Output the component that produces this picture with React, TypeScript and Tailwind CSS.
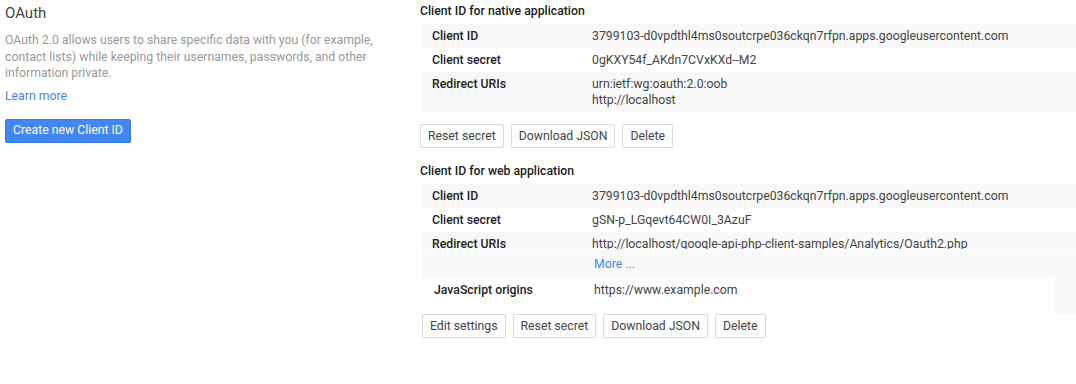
import React from "react";

type Row = { label: string; values: string[] };

const nativeRows: Row[] = [
  { label: "Client ID", values: ["3799103-d0vpdthl4ms0soutcrpe036ckqn7rfpn.apps.googleusercontent.com"] },
  { label: "Client secret", values: ["0gKXY54f_AKdn7CVxKXd--M2"] },
  { label: "Redirect URIs", values: ["urn:ietf:wg:oauth:2.0:oob", "http://localhost"] },
];

function Btn({ children }: { children: React.ReactNode }) {
  return (
    <button className="h-[24px] px-[7px] border border-[#d9d9d9] rounded-[2px] bg-white text-[12.25px] text-[#444] leading-none hover:border-[#c6c6c6]">
      {children}
    </button>
  );
}

function InfoRow({ row, shade }: { row: Row; shade: boolean }) {
  return (
    <div className={`flex pl-[12px] py-[4px] ${shade ? "bg-[#f9f9f9]" : "bg-white"}`}>
      <div className="w-[160px] shrink-0 font-medium text-[#222]">{row.label}</div>
      <div className="text-[#444]">
        {row.values.map((v) => (
          <div key={v}>{v}</div>
        ))}
      </div>
    </div>
  );
}

export default function App() {
  return (
    <div className="w-[1076px] h-[384px] bg-white flex font-['Roboto',sans-serif] text-[12.25px] leading-[16px] overflow-hidden">
      {/* left: oauth intro */}
      <div className="w-[420px] shrink-0 pl-[5px] pt-[3px]">
        <h2 className="text-[15px] leading-[20px] text-[#444]">OAuth</h2>
        <p className="w-[380px] mt-[9px] text-[#999] leading-[16.5px]">
          OAuth 2.0 allows users to share specific data with you (for example, contact lists) while keeping their
          usernames, passwords, and other information private.
        </p>
        <a href="#" className="block mt-[6px] text-[#4285f4]">Learn more</a>
        <button className="mt-[15px] h-[24px] px-[7px] rounded-[2px] bg-[#4285f4] border border-[#3079ed] text-white text-[12.25px] leading-none">
          Create new Client ID
        </button>
      </div>

      {/* right: client ids */}
      <div className="flex-1 pt-[3px]">
        <h3 className="font-medium text-[#222] leading-[16px]">Client ID for native application</h3>
        <div className="mt-[5px]">
          {nativeRows.map((r, i) => (
            <InfoRow key={r.label} row={r} shade={i % 2 === 0} />
          ))}
        </div>
        <div className="flex gap-[7px] mt-[12px]">
          <Btn>Reset secret</Btn>
          <Btn>Download JSON</Btn>
          <Btn>Delete</Btn>
        </div>

        <h3 className="mt-[15px] font-medium text-[#222] leading-[16px]">Client ID for web application</h3>
        <div className="mt-[5px]">
          <InfoRow
            row={{ label: "Client ID", values: ["3799103-d0vpdthl4ms0soutcrpe036ckqn7rfpn.apps.googleusercontent.com"] }}
            shade
          />
          <InfoRow row={{ label: "Client secret", values: ["gSN-p_LGqevt64CW0I_3AzuF"] }} shade={false} />
          <div className="h-[17px] overflow-hidden">
            <InfoRow
              row={{ label: "Redirect URIs", values: ["http://localhost/google-api-php-client-samples/Analytics/Oauth2.php"] }}
              shade
            />
          </div>
          <div className="pl-[2px]">
            <div className="w-[608px] h-[1px] bg-white" />
            <div className="h-[28px] bg-[#f9f9f9] pl-[172px] pt-[6px]">
              <a href="#" className="text-[#4285f4]">More ...</a>
            </div>
            <div className="flex bg-[#f9f9f9]">
              <div className="w-[632px] h-[36px] bg-white flex pl-[12px] pt-[4px]">
                <div className="w-[160px] shrink-0 font-medium text-[#222]">JavaScript origins</div>
                <div className="text-[#444]">https://www.example.com</div>
              </div>
            </div>
            <div className="flex gap-[7px]">
              <Btn>Edit settings</Btn>
              <Btn>Reset secret</Btn>
              <Btn>Download JSON</Btn>
              <Btn>Delete</Btn>
            </div>
          </div>
        </div>
      </div>
    </div>
  );
}
